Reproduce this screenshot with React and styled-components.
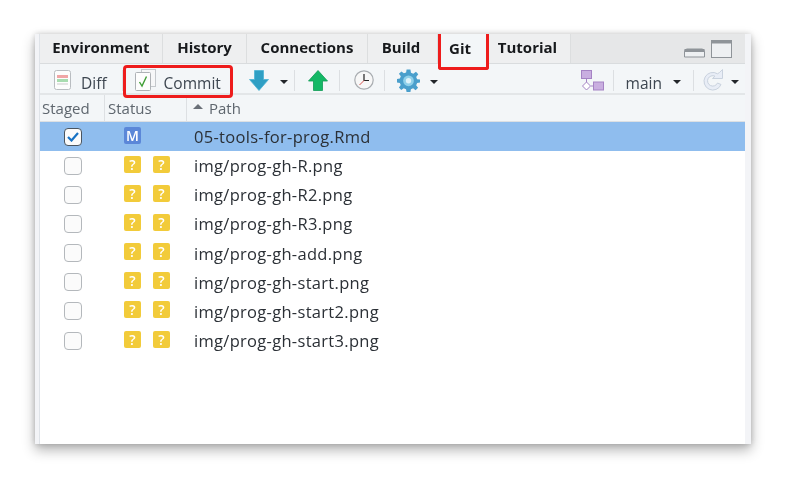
import React from "react"
import styled, { createGlobalStyle } from "styled-components"

const font = '"Open Sans", "Noto Sans", sans-serif'
const red = "#ee1c1c"

const Global = createGlobalStyle`
  html, body { margin: 0; background: #fff; }
  * { box-sizing: border-box; }
`

const Page = styled.div`
  width: 786px;
  height: 479px;
  padding: 34px 35px 35px;
  background: #fff;
  overflow: hidden;
  font-family: ${font};
`

const Frame = styled.div`
  position: relative;
  width: 716px;
  height: 410px;
  padding: 0 6px 0 4px;
  background: #f3f4f7;
  box-shadow: 0 6px 12px rgba(0, 0, 0, 0.3), 0 0 6px rgba(0, 0, 0, 0.18);
  filter: blur(0.35px);
`

const Panel = styled.div`
  height: 100%;
  display: flex;
  flex-direction: column;
  background: #fff;
  border-left: 1px solid #dfe3e8;
`

const TabBar = styled.div`
  height: 30px;
  display: flex;
  background: #e6e7e8;
  border-bottom: 1px solid #d9dcde;
`

const Tab = styled.div`
  width: ${p => p.$w}px;
  display: flex;
  align-items: center;
  justify-content: center;
  padding-right: ${p => p.$pr || 0}px;
  padding-bottom: 3px;
  font-size: 15px;
  font-weight: 700;
  color: #17191c;
  background: ${p => (p.$active ? "#f3f6f8" : "#eeeff0")};
  border-right: 1px solid #dcdedf;
  height: ${p => (p.$active ? "30px" : "29px")};
`

const WindowButtons = styled.div`
  margin-left: auto;
  display: flex;
  align-items: flex-end;
  gap: 6px;
  padding: 0 13px 5px 0;
`

const Toolbar = styled.div`
  height: 31px;
  display: flex;
  align-items: center;
  background: #f3f6f8;
  border-bottom: 2px solid #e3e6e8;
  padding: 3px 0 0 14px;
`

const Tool = styled.div`
  display: flex;
  align-items: center;
  margin-left: ${p => p.$ml || 0}px;
  flex: none;
`

const ToolLabel = styled.span`
  font-size: 15.5px;
  color: #3d4650;
  margin-left: ${p => p.$ml || 0}px;
  margin-top: 5px;
`

const Sep = styled.div`
  width: 1px;
  height: 21px;
  background: #dcdfe2;
  margin-left: ${p => p.$ml || 0}px;
  flex: none;
`

const Caret = styled.div`
  width: 0;
  height: 0;
  margin-left: ${p => p.$ml || 0}px;
  margin-top: 3px;
  border-left: 4px solid transparent;
  border-right: 4px solid transparent;
  border-top: 4px solid #23262a;
  flex: none;
`

const Push = styled.div`
  flex: 1;
`

const Head = styled.div`
  height: 27px;
  display: grid;
  grid-template-columns: 65px 82px 1fr;
  background: #f3f6f8;
  border-bottom: 1px solid #dde0e3;
`

const HeadCell = styled.div`
  display: flex;
  align-items: center;
  gap: 6px;
  padding-left: ${p => p.$pl}px;
  font-size: 15px;
  color: #5e666e;
  border-right: ${p => (p.$last ? "none" : "1px solid #dde0e3")};
`

const SortUp = styled.div`
  width: 0;
  height: 0;
  margin-top: -4px;
  border-left: 5px solid transparent;
  border-right: 5px solid transparent;
  border-bottom: 5px solid #6a7078;
`

const Row = styled.div`
  height: 29.15px;
  display: grid;
  grid-template-columns: 65px 82px 1fr;
  align-items: center;
  background: ${p => (p.$selected ? "#8fbdee" : "#fff")};
`

const CheckCell = styled.div`
  display: flex;
  justify-content: center;
  padding-left: 1px;
`

const Checkbox = styled.div`
  width: 18px;
  height: 18px;
  display: flex;
  align-items: center;
  justify-content: center;
  background: #fbfbfb;
  border-radius: 4px;
  border: 1.5px solid ${p => (p.$checked ? "#4a5560" : "#b4b8bc")};
`

const StatusCell = styled.div`
  display: flex;
  gap: 12px;
  padding-left: 19px;
  margin-top: -3px;
`

const Badge = styled.div`
  width: 17px;
  height: 17px;
  display: flex;
  align-items: center;
  justify-content: center;
  border-radius: 2px;
  font-size: 14px;
  font-weight: 600;
  color: #fff;
  background: ${p => (p.$kind === "M" ? "#5b87d8" : "#f2cb3a")};
`

const PathCell = styled.div`
  padding-left: 7px;
  font-size: 16.5px;
  letter-spacing: 0.3px;
  color: #2b3036;
`

const Highlight = styled.div`
  position: absolute;
  left: ${p => p.$x}px;
  top: ${p => p.$y}px;
  width: ${p => p.$w}px;
  height: ${p => p.$h}px;
  border: 3px solid ${red};
  border-radius: ${p => (p.$open ? "0 0 3px 3px" : "4px")};
  border-top: ${p => (p.$open ? "none" : `3px solid ${red}`)};
`

const tabs = [
  { label: "Environment", w: 123 },
  { label: "History", w: 84 },
  { label: "Connections", w: 121 },
  { label: "Build", w: 70, pr: 3 },
  { label: "Git", w: 51, pr: 6, active: true },
  { label: "Tutorial", w: 82, pr: 4 },
]

const files = [
  "05-tools-for-prog.Rmd",
  "img/prog-gh-R.png",
  "img/prog-gh-R2.png",
  "img/prog-gh-R3.png",
  "img/prog-gh-add.png",
  "img/prog-gh-start.png",
  "img/prog-gh-start2.png",
  "img/prog-gh-start3.png",
]

const DiffIcon = () => (
  <svg width="17" height="20" viewBox="0 0 17 20">
    <rect x="0.5" y="0.5" width="16" height="19" rx="2" fill="#fdfdfd" stroke="#b9bdc1" />
    <rect x="3" y="5" width="11" height="3" fill="#f0a6a6" />
    <rect x="3" y="9" width="11" height="3" fill="#a8dcb0" />
    <rect x="3" y="13" width="11" height="2" fill="#e4e4e4" />
  </svg>
)

const CommitIcon = () => (
  <svg width="21" height="22" viewBox="0 0 21 22">
    <rect x="6.5" y="0.5" width="14" height="17" fill="#f6f7f8" stroke="#c4c8cc" />
    <rect x="0.5" y="3.5" width="15" height="18" rx="1" fill="#fdfdfd" stroke="#aeb2b6" />
    <path d="M4.5 13 L7 17 L11.5 7.5" fill="none" stroke="#3f9e35" strokeWidth="1.4" />
  </svg>
)

const ArrowDown = () => (
  <svg width="20" height="21" viewBox="0 0 20 21">
    <path d="M5.5 0.5 H14.5 V9.5 H19.5 L10 20.5 L0.5 9.5 H5.5 Z" fill="#2f9fc4" stroke="#4cb3d4" strokeWidth="0.8" />
  </svg>
)

const ArrowUp = () => (
  <svg width="20" height="21" viewBox="0 0 20 21">
    <path d="M5.5 20.5 H14.5 V11 H19.5 L10 0.5 L0.5 11 H5.5 Z" fill="#14b866" stroke="#0f9c55" strokeWidth="0.8" />
  </svg>
)

const ClockIcon = () => (
  <svg width="20" height="20" viewBox="0 0 20 20">
    <circle cx="10" cy="10" r="9.2" fill="#f7f7f7" stroke="#a9adb1" strokeWidth="1.2" />
    <path d="M10 4 V10.5 H15" fill="none" stroke="#222" strokeWidth="1.2" />
    <path d="M10 10.5 L5.5 15" fill="none" stroke="#d9534f" strokeWidth="1" />
  </svg>
)

const GearIcon = () => (
  <svg width="23" height="23" viewBox="0 0 24 24">
    <path
      d="M10 0.5 H14 L14.6 4 L17 5 L19.8 2.9 L22.2 5.6 L20 8.3 L21 10.6 L24 11 V14 L21 14.6 L20 17 L22 19.6 L19.4 22.2 L16.8 20.2 L14.5 21 L14 24 H10 L9.4 21 L7 20 L4.4 22 L2 19.4 L3.9 16.8 L3 14.5 L0 14 V10.5 L3 10 L4 7.6 L2 5 L4.6 2.5 L7.2 4.4 L9.5 3.6 Z"
      fill="#4a9fcc"
    />
    <circle cx="12" cy="12.3" r="5.6" fill="#8fd0ea" />
    <circle cx="12" cy="12.3" r="2.8" fill="#dff3fa" />
  </svg>
)

const BranchIcon = () => (
  <svg width="23" height="21" viewBox="0 0 23 21">
    <rect x="0.5" y="0.5" width="10" height="8" fill="#c9aee0" stroke="#a583c4" />
    <path d="M5.5 9 V12" stroke="#a583c4" />
    <path d="M5.5 12 L9.5 16 L5.5 20 L1.5 16 Z" fill="#fff" stroke="#a583c4" />
    <path d="M10 16 H13" stroke="#a583c4" />
    <rect x="12.5" y="12" width="10" height="8" fill="#c9aee0" stroke="#a583c4" />
  </svg>
)

const RefreshIcon = () => (
  <svg width="22" height="22" viewBox="0 0 22 22">
    <path
      d="M15.5 4.8 A8.8 8.8 0 1 0 19 15.5 L15.5 14 A5.2 5.2 0 1 1 13 7.2 L10.5 9.5 H20.5 V0.5 L17.5 3.5 Z"
      fill="#e8edf6"
      stroke="#c9d2de"
    />
  </svg>
)

const Check = () => (
  <svg width="12" height="10" viewBox="0 0 12 10">
    <path d="M1 5 L4.5 8.5 L11 1" fill="none" stroke="#1872c4" strokeWidth="2.2" />
  </svg>
)

export default function App() {
  return (
    <>
      <Global />
      <Page>
        <Frame>
          <Panel>
            <TabBar>
              {tabs.map(t => (
                <Tab key={t.label} $w={t.w} $pr={t.pr} $active={t.active}>{t.label}</Tab>
              ))}
              <WindowButtons>
                <svg width="21" height="10" viewBox="0 0 21 10">
                  <path d="M0.5 9 V4 Q0.5 1 3 1 H18 Q20.5 1 20.5 4 V9 Z" fill="#eef0f2" stroke="#8f9499" />
                  <rect x="0.5" y="1" width="20" height="3" fill="#8f9499" />
                </svg>
                <svg width="21" height="18" viewBox="0 0 21 18">
                  <rect x="0.5" y="0.5" width="20" height="17" fill="#eef0f2" stroke="#8f9499" />
                  <rect x="0.5" y="0.5" width="20" height="3" fill="#8f9499" />
                </svg>
              </WindowButtons>
            </TabBar>

            <Toolbar>
              <Tool><DiffIcon /><ToolLabel $ml={10}>Diff</ToolLabel></Tool>
              <Sep $ml={15} />
              <Tool $ml={12}><CommitIcon /><ToolLabel $ml={8}>Commit</ToolLabel></Tool>
              <Tool $ml={28}><ArrowDown /></Tool>
              <Caret $ml={11} />
              <Sep $ml={6} />
              <Tool $ml={13}><ArrowUp /></Tool>
              <Sep $ml={11} />
              <Tool $ml={14}><ClockIcon /></Tool>
              <Sep $ml={10} />
              <Tool $ml={12}><GearIcon /></Tool>
              <Caret $ml={10} />
              <Push />
              <Tool><BranchIcon /></Tool>
              <Sep $ml={9} />
              <ToolLabel $ml={12}>main</ToolLabel>
              <Caret $ml={11} />
              <Sep $ml={12} />
              <Tool $ml={8}><RefreshIcon /></Tool>
              <Caret $ml={7} />
              <Tool $ml={6} />
            </Toolbar>

            <Head>
              <HeadCell $pl={2}>Staged</HeadCell>
              <HeadCell $pl={3}>Status</HeadCell>
              <HeadCell $pl={6} $last><SortUp />Path</HeadCell>
            </Head>

            {files.map((f, i) => (
              <Row key={f} $selected={i === 0}>
                <CheckCell>
                  <Checkbox $checked={i === 0}>{i === 0 && <Check />}</Checkbox>
                </CheckCell>
                <StatusCell>
                  {i === 0 ? (
                    <Badge $kind="M">M</Badge>
                  ) : (
                    <>
                      <Badge>?</Badge>
                      <Badge>?</Badge>
                    </>
                  )}
                </StatusCell>
                <PathCell>{f}</PathCell>
              </Row>
            ))}
          </Panel>
          <Highlight $x={88} $y={31} $w={110} $h={33} />
          <Highlight $x={403} $y={0} $w={51} $h={36} $open />
        </Frame>
      </Page>
    </>
  )
}
